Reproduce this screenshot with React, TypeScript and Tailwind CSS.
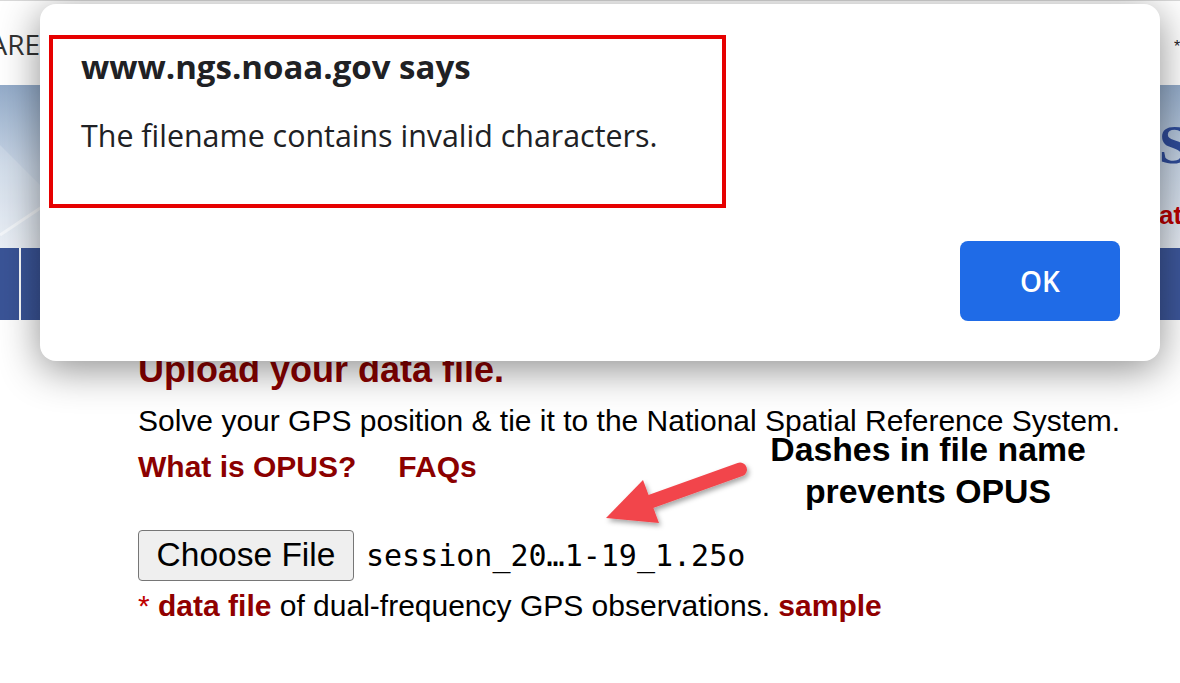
export default function App() {
  return (
    <div className="relative w-[1180px] h-[683px] overflow-hidden bg-white font-['Liberation_Sans',Arial,sans-serif]">
      {/* top strip */}
      <div className="h-[85px] border-t border-[#d9d9d9] flex justify-between">
        <div className="w-[40px] overflow-hidden flex justify-end pt-[29px]">
          <span className="whitespace-nowrap text-[28px] leading-none text-[#333] font-['Open_Sans',sans-serif]">SOFTWARE</span>
        </div>
        <div className="pt-[34px] pr-0 w-[6px] overflow-hidden">
          <span className="text-[16px] leading-none text-[#222]">*</span>
        </div>
      </div>

      {/* banner */}
      <div className="relative h-[163px] bg-linear-to-b from-[#94acca] via-[#c9d6e6] to-[#e6ecf4] flex justify-end overflow-hidden">
        <svg className="absolute left-0 top-0" width="60" height="163" viewBox="0 0 60 163">
          <path d="M0 150 L60 110" stroke="rgba(255,255,255,0.55)" strokeWidth="3" />
          <path d="M0 60 L60 120 L60 163 L0 163 Z" fill="rgba(255,255,255,0.18)" />
        </svg>
        <div className="w-[21px] flex flex-col">
          <span className="mt-[33px] whitespace-nowrap text-[54px] leading-none font-bold text-[#2f4c9a] font-['Liberation_Serif',serif]">S</span>
          <span className="mt-[30px] whitespace-nowrap text-[26px] leading-none font-bold text-[#b80000]">at</span>
        </div>
      </div>

      {/* nav */}
      <div className="h-[72px] bg-linear-to-r from-[#3a5497] to-[#3d579b] flex">
        <div className="w-[19px]" />
        <div className="w-[2px] bg-white" />
        <div className="flex-1" />
      </div>

      {/* content */}
      <div className="pl-[138px] pt-[30px] text-black">
        <h1 className="text-[36px] leading-[40px] font-bold text-[#8b0000]">Upload your data file.</h1>
        <p className="mt-[13px] text-[30px] leading-[36px]">
          Solve your GPS position &amp; tie it to the National Spatial Reference System.
        </p>
        <div className="mt-[10px] flex text-[30px] leading-[36px] font-bold text-[#8b0000]">
          <span>What is OPUS?</span>
          <span className="ml-[42px]">FAQs</span>
        </div>
        <div className="mt-[45px] flex items-center h-[51px]">
          <div className="h-[51px] w-[216px] flex items-center justify-center border border-[#767676] rounded-[4px] bg-[#efefef] text-[33.5px] text-black">
            Choose File
          </div>
          <span className="ml-[12px] text-[30px] leading-none font-['DejaVu_Sans_Mono',monospace] text-black">session_20…1-19_1.25o</span>
        </div>
        <p className="mt-[7px] text-[30px] leading-[36px]">
          <span className="text-[#c00000]">*</span>{" "}
          <span className="font-bold text-[#900000]">data file</span> of dual-frequency GPS observations.{" "}
          <span className="font-bold text-[#900000]">sample</span>
        </p>
      </div>

      {/* annotation arrow */}
      <svg className="absolute left-0 top-0 pointer-events-none" width="1180" height="683" viewBox="0 0 1180 683">
        <defs>
          <filter id="ds" x="-20%" y="-20%" width="140%" height="160%">
            <feDropShadow dx="2" dy="3" stdDeviation="2.5" floodColor="#000" floodOpacity="0.35" />
          </filter>
        </defs>
        <g filter="url(#ds)">
          <line x1="740" y1="469.5" x2="648" y2="502.5" stroke="#f2454b" strokeWidth="14" strokeLinecap="round" />
          <polygon points="606,518 643,480 659,523" fill="#f2454b" />
        </g>
      </svg>

      {/* annotation text */}
      <div className="absolute left-[699px] top-[428px] w-[458px] text-center text-[33.8px] leading-[42px] font-bold text-black">
        Dashes in file name
        <br />
        prevents OPUS
      </div>

      {/* alert dialog */}
      <div className="absolute left-[40px] top-[4px] w-[1120px] h-[357px] rounded-2xl bg-white shadow-[0_8px_40px_rgba(0,0,0,0.45)] flex flex-col pl-[41px] pr-[40px] pt-[46px] pb-[40px] font-['Open_Sans',sans-serif] text-[#202124]">
        <div className="text-[33px] leading-none font-bold whitespace-nowrap">www.ngs.noaa.gov says</div>
        <div className="mt-[38px] text-[30.4px] leading-none whitespace-nowrap">The filename contains invalid characters.</div>
        <button className="mt-auto self-end w-[160px] h-[80px] rounded-[8px] bg-[#1f6be7] text-white text-[28px] font-semibold">
          OK
        </button>
        <div className="absolute left-[9px] top-[31px] w-[677px] h-[173px] border-4 border-[#e60000]" />
      </div>
    </div>
  );
}
